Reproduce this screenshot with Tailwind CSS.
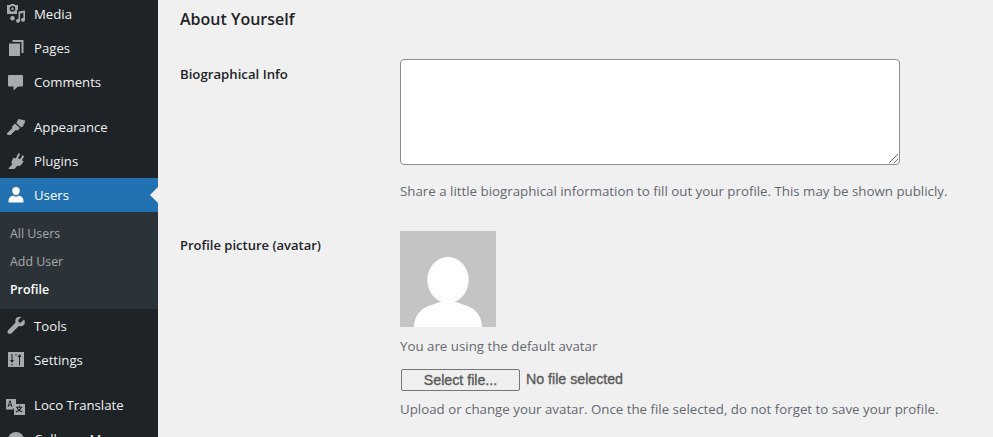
<!DOCTYPE html>
<html>
<head>
<meta charset="utf-8">
<script src="https://cdn.jsdelivr.net/npm/@tailwindcss/browser@4"></script>
</head>
<body class="m-0 bg-[#f0f0f1] overflow-hidden font-['Open_Sans','Noto_Sans',sans-serif]">
<div class="flex h-[437px] w-[993px] overflow-hidden">
  <aside class="w-[158px] shrink-0 h-full overflow-hidden bg-[#1d2327] text-[13.2px] text-[#f0f0f1]">
    <nav class="flex flex-col -mt-[3px]">
      <div class="h-[34px] flex items-center gap-[8px] pl-[6px]">
        <svg class="w-[20px] h-[20px] text-[#a7aaad]" viewBox="0 0 20 20" fill="currentColor" fill-rule="evenodd"><path d="M1 1h3l1-1h3l1 1h3v5h-1.500L11 6.500V10H1zM6.500 2a2.800 2.800 0 100 5.600 2.800 2.800 0 000-5.600zM6.500 3.500a1.300 1.300 0 110 2.600 1.300 1.300 0 010-2.600z"/><path d="M12.500 7.500L19 6.500v9.300a2 2 0 11-1.600-1.900V9l-3.300.5v7.300a2 2 0 11-1.600-1.900zM6.500 12a2.300 2.300 0 100 4.600 2.300 2.300 0 000-4.600z"/></svg>
        <span class="pt-[2px]">Media</span>
      </div>
      <div class="h-[34px] flex items-center gap-[8px] pl-[6px]">
        <svg class="w-[20px] h-[20px] text-[#a7aaad]" viewBox="0 0 20 20" fill="currentColor"><path d="M6.500 2H17.500v13h-2V4H6.500zM3 5.500h11V18H3z"/></svg>
        <span class="pt-[2px]">Pages</span>
      </div>
      <div class="h-[34px] flex items-center gap-[8px] pl-[6px]">
        <svg class="w-[20px] h-[20px] text-[#a7aaad]" viewBox="0 0 20 20" fill="currentColor"><path d="M3 3h13a1 1 0 011 1v9.500a1 1 0 01-1 1H12L7.500 18.500v-4H3a1 1 0 01-1-1V4a1 1 0 011-1z"/></svg>
        <span class="pt-[2px]">Comments</span>
      </div>
      <div class="h-[11px]"></div>
      <div class="h-[34px] flex items-center gap-[8px] pl-[6px]">
        <svg class="w-[20px] h-[20px] text-[#a7aaad]" viewBox="0 0 20 20" fill="currentColor"><path d="M12.500 2l7 1.500-1 1.500.5 1-1.500 1 .3 1.500-2.500 2-5-4.500zM9 6.500l5 4.500-2.500 2.800-1.500-1-5.500 5.200L1.500 18 .8 16.500l5.700-5.500-.5-1.500z"/></svg>
        <span class="pt-[2px]">Appearance</span>
      </div>
      <div class="h-[34px] flex items-center gap-[8px] pl-[6px]">
        <svg class="w-[20px] h-[20px] text-[#a7aaad]" viewBox="0 0 20 20" fill="currentColor"><path d="M12.500 2l1.800 1-2.300 4 2.200 1.200 2.300-4 1.700 1-2.300 4 1.700 1-1.700 2.800c-1 1.700-2.800 2.300-4.500 1.800L8.500 18H2.800l-.3-.8 3.700-3.700C5.200 12 5.300 10.500 6.200 9L7.800 6.500l1.900 1z"/></svg>
        <span class="pt-[2px]">Plugins</span>
      </div>
      <div class="relative h-[34px] flex items-center gap-[8px] pl-[6px] bg-[#2271b1] text-white">
        <svg class="w-[20px] h-[20px] text-white" viewBox="0 0 20 20" fill="currentColor"><path d="M10 2a3.800 3.800 0 013.800 3.800c0 2.200-1.700 4.400-3.800 4.400S6.200 8 6.200 5.800A3.800 3.800 0 0110 2zM7 10.500c.8.700 1.900 1.200 3 1.200s2.200-.5 3-1.200c2.800.7 4.500 2.700 4.500 5.500v1.500H2.500V16c0-2.800 1.700-4.800 4.500-5.500z"/></svg>
        <span class="pt-[2px]">Users</span>
        <span class="absolute right-0 top-[9px] w-0 h-0 border-y-[8px] border-y-transparent border-r-[8px] border-r-[#f0f0f1]"></span>
      </div>
      <div class="h-[97px] bg-[#2c3338] text-[12.4px] text-[#a7aaad] flex flex-col pt-[8px]">
        <div class="h-[28px] flex items-center pl-[10px]">All Users</div>
        <div class="h-[28px] flex items-center pl-[10px]">Add User</div>
        <div class="h-[28px] flex items-center pl-[10px] font-semibold text-white">Profile</div>
      </div>
      <div class="h-[34px] flex items-center gap-[8px] pl-[6px]">
        <svg class="w-[20px] h-[20px] text-[#a7aaad]" viewBox="0 0 20 20" fill="currentColor"><path d="M18 3.500l-3.200 3.200-2.200-.5-.5-2.200L15.300 1c-2.600-.8-5.300.4-5.900 3-.2.900-.1 1.800.2 2.600L2.300 13.900c-1 1-1 2.500-.1 3.400.9.900 2.400.9 3.400-.1l7.300-7.200c2.600 1 5.400-.3 5.900-3 .2-1 .1-2-.8-3.500z"/></svg>
        <span class="pt-[2px]">Tools</span>
      </div>
      <div class="h-[34px] flex items-center gap-[8px] pl-[6px]">
        <svg class="w-[20px] h-[20px] text-[#a7aaad]" viewBox="0 0 20 20" fill="currentColor" fill-rule="evenodd"><path d="M2 2h16v15H2zM5.500 4v6H4l2 3 2-3H6.500V4zM5.500 14v1.500h1V14zM13.500 4L11.500 7H13v8.500h1V7h1.500zM9.500 4v1.500h1V4z"/></svg>
        <span class="pt-[2px]">Settings</span>
      </div>
      <div class="h-[11px]"></div>
      <div class="h-[34px] flex items-center gap-[8px] pl-[6px]">
        <svg class="w-[20px] h-[20px] text-[#a7aaad]" viewBox="0 0 20 20" fill="currentColor" fill-rule="evenodd"><g transform="translate(0 4)"><path d="M0 0h10v9H7.500v1.500H0zM3.500 1.500L1.500 8h1l.4-1.500h2.200L5.500 8h1L4.500 1.500zM4 3l.8 2.500H3.200z"/><path d="M8 5h11v11H8zM13 6.500v1.200H9.800v1h1c.3 1 .8 1.900 1.500 2.600-.8.500-1.700.8-2.600 1l.4 1c1.100-.3 2.100-.7 3-1.300.9.600 1.900 1 3 1.300l.4-1c-.9-.2-1.800-.5-2.600-1 .7-.7 1.200-1.600 1.500-2.600h1v-1H14V6.500zM11.800 8.700h2.400c-.3.700-.7 1.300-1.200 1.900-.5-.6-.9-1.200-1.200-1.900z"/></g></svg>
        <span class="pt-[2px]">Loco Translate</span>
      </div>
      <div class="h-[34px] flex items-center gap-[8px] pl-[6px]">
        <svg class="w-[20px] h-[20px] text-[#a7aaad]" viewBox="0 0 20 20" fill="currentColor"><circle cx="10" cy="11" r="8"/></svg>
        <span class="pt-[2px]">Collapse Menu</span>
      </div>
    </nav>
  </aside>
  <main class="flex-1 pl-[22px] text-[13.3px] text-[#646970]">
    <h2 class="text-[16px] leading-[20px] font-semibold text-[#1d2327] mt-[9px]">About Yourself</h2>
    <div class="flex mt-[30px]">
      <div class="w-[220px] shrink-0 font-semibold text-[#1d2327] text-[13.2px] leading-[20px] mt-[5px]">Biographical Info</div>
      <div class="flex flex-col">
        <div class="relative w-[500px] h-[106px] bg-white border border-[#8c8f94] rounded-[4px]">
          <svg class="absolute right-[1px] bottom-[1px] w-[9px] h-[9px] text-[#777]" viewBox="0 0 9 9" fill="none" stroke="currentColor" stroke-width="1"><path d="M0 9L9 0M5 9L9 5"/></svg>
        </div>
        <p class="mt-[16px] leading-[20px]">Share a little biographical information to fill out your profile. This may be shown publicly.</p>
      </div>
    </div>
    <div class="flex mt-[30px]">
      <div class="w-[220px] shrink-0 font-semibold text-[#1d2327] text-[13px] leading-[20px] mt-[4px]">Profile picture (avatar)</div>
      <div class="flex flex-col">
        <svg class="w-[96px] h-[96px]" viewBox="0 0 96 96"><rect width="96" height="96" fill="#c4c4c4"/><ellipse cx="48" cy="49" rx="20.700" ry="23" fill="#fff"/><path fill="#fff" d="M14 96C14 84 22 76 33 73.500L40 71H56L63 73.500C74 76 82 84 82 96Z"/></svg>
        <p class="mt-[9px] leading-[20px]">You are using the default avatar</p>
        <div class="flex items-center mt-[13px] font-['Liberation_Sans',sans-serif] text-[#5a5a5a] text-[14.200px] [-webkit-text-stroke:0.35px_#5a5a5a]">
          <button class="w-[119px] h-[22px] ml-[1px] border border-[#767676] rounded-[2px] bg-[#efefef] text-[14.200px] text-[#5a5a5a] text-center">Select file...</button>
          <span class="ml-[6px]">No file selected</span>
        </div>
        <p class="mt-[8px] leading-[20px]">Upload or change your avatar. Once the file selected, do not forget to save your profile.</p>
      </div>
    </div>
  </main>
</div>
</body>
</html>
